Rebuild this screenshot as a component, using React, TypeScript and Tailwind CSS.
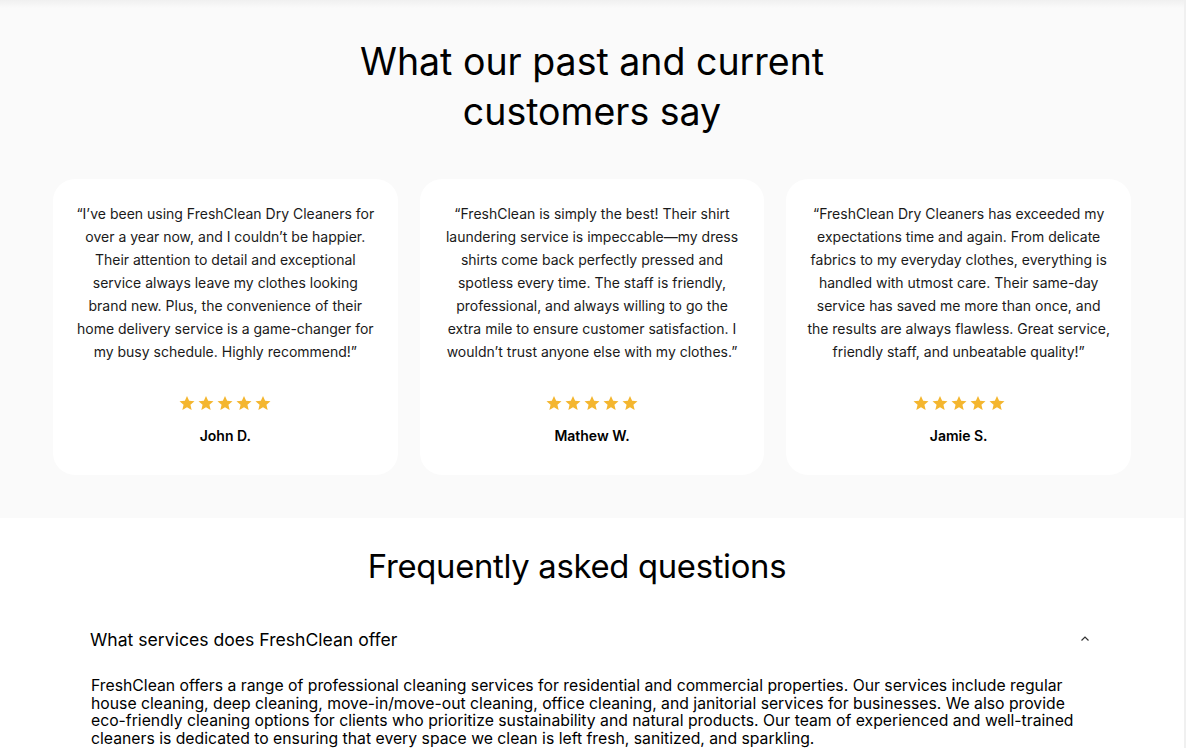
import React from 'react';

const font = { fontFamily: 'Inter, "Noto Sans", sans-serif' };

const reviews = [
  {
    lines: [
      '“I’ve been using FreshClean Dry Cleaners for',
      'over a year now, and I couldn’t be happier.',
      'Their attention to detail and exceptional',
      'service always leave my clothes looking',
      'brand new. Plus, the convenience of their',
      'home delivery service is a game-changer for',
      'my busy schedule. Highly recommend!”',
    ],
    name: 'John D.',
  },
  {
    lines: [
      '“FreshClean is simply the best! Their shirt',
      'laundering service is impeccable—my dress',
      'shirts come back perfectly pressed and',
      'spotless every time. The staff is friendly,',
      'professional, and always willing to go the',
      'extra mile to ensure customer satisfaction. I',
      'wouldn’t trust anyone else with my clothes.”',
    ],
    name: 'Mathew W.',
  },
  {
    lines: [
      '“FreshClean Dry Cleaners has exceeded my',
      'expectations time and again. From delicate',
      'fabrics to my everyday clothes, everything is',
      'handled with utmost care. Their same-day',
      'service has saved me more than once, and',
      'the results are always flawless. Great service,',
      'friendly staff, and unbeatable quality!”',
    ],
    name: 'Jamie S.',
  },
];

const Star: React.FC = () => (
  <svg width="18" height="18" viewBox="0 0 24 24" className="fill-[#f4b62f]">
    <path d="M12 2.5l2.85 6.6 7.15.62-5.42 4.7 1.62 7.03L12 17.77l-6.2 3.68 1.62-7.03L2 9.72l7.15-.62z" />
  </svg>
);

const ReviewCard: React.FC<{ lines: string[]; name: string }> = ({ lines, name }) => (
  <div className="flex-1 bg-white rounded-[22px] h-[296px] px-[14px] pt-[23px] flex flex-col items-center">
    <p className="text-[14px] leading-[23px] text-[#1a1a1a] text-center whitespace-nowrap">
      {lines.map((l, i) => (
        <React.Fragment key={i}>
          {l}
          {i < lines.length - 1 && <br />}
        </React.Fragment>
      ))}
    </p>
    <div className="flex gap-[1px] mt-[31px]">
      <Star />
      <Star />
      <Star />
      <Star />
      <Star />
    </div>
    <div className="mt-[13px] text-[14px] font-semibold text-black">{name}</div>
  </div>
);

const App: React.FC = () => {
  return (
    <div className="w-[1186px] h-[748px] overflow-hidden flex" style={font}>
      <div className="flex-1 flex flex-col">
        {/* Testimonials */}
        <section className="bg-[#fafafa] h-[518px] flex flex-col">
          <div className="h-[8px] bg-gradient-to-b from-[#f0f0f0] to-[#fafafa]" />
          <h2 className="mt-[29px] text-center text-[37.5px] leading-[50px] text-black font-normal">
            What our past and current
            <br />
            customers say
          </h2>
          <div className="mt-[42px] mx-[53px] flex gap-[22px]">
            {reviews.map((r) => (
              <ReviewCard key={r.name} lines={r.lines} name={r.name} />
            ))}
          </div>
        </section>

        {/* FAQ */}
        <section className="bg-white flex-1">
          <div className="ml-[54px] w-[1046px]">
            <h2 className="mt-[28px] text-center text-[32.8px] leading-[40px] text-black tracking-[-0.3px]">
              Frequently asked questions
            </h2>
            <div className="mt-[41px] flex items-center justify-between pl-[36px] pr-[10px]">
              <span className="text-[17.6px] leading-[26px] text-black">What services does FreshClean offer</span>
              <svg width="10" height="8" viewBox="0 0 10 8" className="mb-[2px]">
                <path d="M1.5 5.5L5 2l3.5 3.5" fill="none" stroke="#333" strokeWidth="1.2" />
              </svg>
            </div>
            <p className="mt-[24px] pl-[37px] pr-[10px] text-[15.75px] leading-[17.5px] text-black">
              FreshClean offers a range of professional cleaning services for residential and commercial properties. Our services include regular house cleaning, deep cleaning, move-in/move-out cleaning, office cleaning, and janitorial services for businesses. We also provide eco-friendly cleaning options for clients who prioritize sustainability and natural products. Our team of experienced and well-trained cleaners is dedicated to ensuring that every space we clean is left fresh, sanitized, and sparkling.
            </p>
          </div>
        </section>
      </div>
      <div className="w-[2px] bg-[#f0f0f0]" />
    </div>
  );
};

export default App;
